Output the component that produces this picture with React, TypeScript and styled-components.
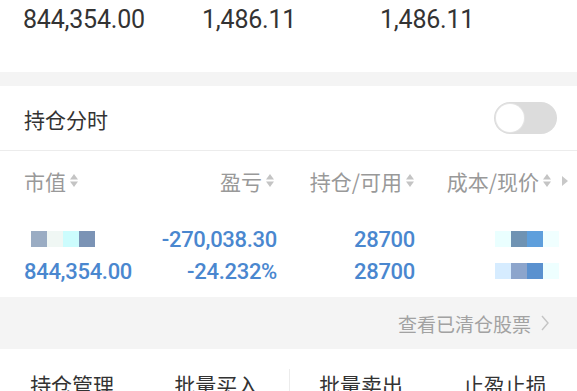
import React, { useState } from "react";
import styled, { createGlobalStyle } from "styled-components";

const Colors = {
  text: "#333333",
  sub: "#999999",
  blue: "#4a87cf",
  band: "#f4f4f4",
  line: "#ececec",
};

const GlobalStyle = createGlobalStyle`
  html, body {
    margin: 0;
    padding: 0;
    background: #ffffff;
  }
  body {
    width: 577px;
    height: 391px;
    overflow: hidden;
    font-family: Roboto, "Noto Sans CJK SC", sans-serif;
  }
`;

const summary = ["844,354.00", "1,486.11", "1,486.11"];

type Cell = { text?: string; blocks?: string[]; offset?: number };

const rows: Cell[][] = [
  [
    { blocks: ["#9aacc3", "#f0f7f4", "#ccfcfd", "#7b93b5"], offset: 7 },
    { text: "-270,038.30" },
    { text: "28700" },
    { blocks: ["#eaffff", "#6f93b3", "#5e9fdc", "#f0ffff"] },
  ],
  [
    { text: "844,354.00" },
    { text: "-24.232%" },
    { text: "28700" },
    { blocks: ["#d6ecff", "#8ca5cc", "#5a91cf", "#eeffff"] },
  ],
];

const headers = ["市值", "盈亏", "持仓/可用", "成本/现价"];
const actions = ["持仓管理", "批量买入", "批量卖出", "止盈止损"];

const SortIcon = () => (
  <svg width="10" height="15" viewBox="0 0 10 15">
    <path d="M5 1 L9 6.5 L1 6.5 Z" fill="#c4c4c4" />
    <path d="M5 14 L9 8.5 L1 8.5 Z" fill="#c4c4c4" />
  </svg>
);

const MoreIcon = () => (
  <svg width="8" height="12" viewBox="0 0 8 12">
    <path d="M1 1 L7 6 L1 11 Z" fill="#c8c8c8" />
  </svg>
);

const Chevron = () => (
  <svg width="10" height="18" viewBox="0 0 10 18">
    <path d="M2 2 L8 9 L2 16" stroke="#c4c4c4" strokeWidth="1.4" fill="none" />
  </svg>
);

export default function App() {
  const [on, setOn] = useState(false);

  return (
    <>
      <GlobalStyle />
      <Page>
        <Summary>
          {summary.map((v, i) => (
            <SummaryValue key={i}>{v}</SummaryValue>
          ))}
        </Summary>
        <Band />
        <ToggleRow>
          <ToggleLabel>持仓分时</ToggleLabel>
          <Switch $on={on} onClick={() => setOn(!on)}>
            <Knob $on={on} />
          </Switch>
        </ToggleRow>
        <Table>
          {headers.map((h, i) => (
            <HeadCell key={h} $col={i}>
              {h}
              <SortWrap>
                <SortIcon />
              </SortWrap>
              {i === 3 && (
                <MoreWrap>
                  <MoreIcon />
                </MoreWrap>
              )}
            </HeadCell>
          ))}
        </Table>
        <DataBody>
          {rows.map((row, r) => (
            <DataRow key={r}>
              {row.map((c, i) => (
                <DataCell key={i} $col={i}>
                  {c.text}
                  {c.blocks && (
                    <Blocks $offset={c.offset || 0}>
                      {c.blocks.map((b, k) => (
                        <Block key={k} $color={b} />
                      ))}
                    </Blocks>
                  )}
                </DataCell>
              ))}
            </DataRow>
          ))}
        </DataBody>
        <ClearedBand>
          <ClearedLink>
            查看已清仓股票
            <Chevron />
          </ClearedLink>
        </ClearedBand>
        <ActionBar>
          {actions.map((a, i) => (
            <Action key={a} $divider={i === 2}>
              {a}
            </Action>
          ))}
        </ActionBar>
      </Page>
    </>
  );
}

const Page = styled.div`
  width: 577px;
  display: flex;
  flex-direction: column;
`;

const Summary = styled.div`
  height: 72px;
  display: grid;
  grid-template-columns: 179px 178px 1fr;
  padding-left: 23px;
  box-sizing: border-box;
`;

const SummaryValue = styled.div`
  font-family: Roboto, sans-serif;
  font-size: 25px;
  line-height: 40px;
  color: ${Colors.text};
  letter-spacing: -0.2px;
`;

const Band = styled.div`
  height: 14px;
  background: ${Colors.band};
`;

const ToggleRow = styled.div`
  height: 64px;
  display: flex;
  align-items: center;
  justify-content: space-between;
  padding: 0 20px 0 24px;
  border-bottom: 1px solid ${Colors.line};
`;

const ToggleLabel = styled.div`
  font-family: "Noto Sans CJK SC", sans-serif;
  font-size: 21px;
  color: ${Colors.text};
  margin-top: 2px;
`;

const Switch = styled.div<{ $on: boolean }>`
  width: 63px;
  height: 32px;
  border-radius: 16px;
  background: ${(p) => (p.$on ? Colors.blue : "#dcdcdc")};
  display: flex;
  align-items: center;
  justify-content: ${(p) => (p.$on ? "flex-end" : "flex-start")};
  padding: 0 2px;
  box-sizing: border-box;
  cursor: pointer;
`;

const Knob = styled.div<{ $on: boolean }>`
  width: 28px;
  height: 28px;
  border-radius: 50%;
  background: #ffffff;
  box-shadow: 0 0 0 1px #e4e4e4;
`;

const grid = `
  display: grid;
  grid-template-columns: 156px 97px 138px 154px;
  padding-left: 24px;
`;

const Table = styled.div`
  ${grid}
  height: 58px;
  align-items: center;
`;

const HeadCell = styled.div<{ $col: number }>`
  font-family: "Noto Sans CJK SC", sans-serif;
  font-size: 21px;
  color: ${Colors.sub};
  display: flex;
  align-items: center;
  justify-content: ${(p) => (p.$col === 0 ? "flex-start" : "flex-end")};
  padding-right: ${(p) => (p.$col === 1 ? "2px" : "0")};
  margin-top: 1px;
`;

const SortWrap = styled.span`
  display: flex;
  margin-left: 3px;
`;

const MoreWrap = styled.span`
  display: flex;
  margin-left: 9px;
`;

const DataBody = styled.div`
  padding: 14px 0 10px;
`;

const DataRow = styled.div`
  ${grid}
  height: 32px;
  align-items: center;
`;

const DataCell = styled.div<{ $col: number }>`
  font-family: Roboto, sans-serif;
  font-size: 22px;
  font-weight: 500;
  letter-spacing: -0.3px;
  color: ${Colors.blue};
  display: flex;
  justify-content: ${(p) => (p.$col === 0 ? "flex-start" : "flex-end")};
  padding-right: ${(p) => (p.$col === 3 ? "10px" : "0")};
`;

const Blocks = styled.div<{ $offset: number }>`
  display: flex;
  margin-left: ${(p) => p.$offset}px;
`;

const Block = styled.span<{ $color: string }>`
  width: 16px;
  height: 16px;
  background: ${(p) => p.$color};
`;

const ClearedBand = styled.div`
  height: 52px;
  background: ${Colors.band};
  display: flex;
  align-items: center;
  justify-content: flex-end;
  padding-right: 27px;
`;

const ClearedLink = styled.div`
  font-family: "Noto Sans CJK SC", sans-serif;
  font-size: 19px;
  color: #a2a2a2;
  display: flex;
  align-items: center;
  gap: 9px;
`;

const ActionBar = styled.div`
  display: grid;
  grid-template-columns: repeat(4, 1fr);
  padding-top: 20px;
  height: 60px;
`;

const Action = styled.div<{ $divider: boolean }>`
  font-family: "Noto Sans CJK SC", sans-serif;
  font-size: 21px;
  color: ${Colors.text};
  text-align: center;
  line-height: 30px;
  border-left: ${(p) => (p.$divider ? `1px solid ${Colors.line}` : "none")};
`;
